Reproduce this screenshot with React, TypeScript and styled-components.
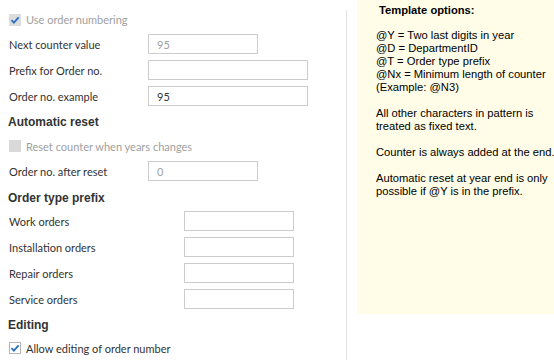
import styled, { createGlobalStyle } from "styled-components";

const GlobalStyle = createGlobalStyle`
  html, body {
    margin: 0;
    padding: 0;
    background: #ffffff;
  }
  body {
    font-family: Lato, "Liberation Sans", sans-serif;
    font-size: 11px;
    color: #333333;
  }
`;

const CheckIcon = ({ disabled }: { disabled?: boolean }) => (
  <svg width="12" height="12" viewBox="0 0 12 12">
    <rect x="0.5" y="0.5" width="11" height="11" fill={disabled ? "#dcdcdc" : "#ffffff"} stroke={disabled ? "#dcdcdc" : "#b5b5b5"} />
    <path d="M2.5 6.2 L4.9 8.6 L9.6 3.4" fill="none" stroke="#2b6fc1" strokeWidth="1.8" />
  </svg>
);

const EmptyBox = () => (
  <svg width="12" height="12" viewBox="0 0 12 12">
    <rect x="0" y="0" width="12" height="12" fill="#d9d9d9" />
  </svg>
);

type FieldProps = { label: string; value?: string; wide?: boolean; disabled?: boolean; indent?: number };

const Field = ({ label, value, wide, disabled, indent = 139 }: FieldProps) => (
  <FieldRow>
    <Label $w={indent}>{label}</Label>
    <Input $w={wide ? 160 : 110} $disabled={disabled} readOnly value={value ?? ""} />
  </FieldRow>
);

export default function App() {
  return (
    <>
      <GlobalStyle />
      <Page>
        <LeftPane>
          <CheckRow $h={23} $muted>
            <CheckIcon disabled />
            <span>Use order numbering</span>
          </CheckRow>
          <Field label="Next counter value" value="95" disabled />
          <Field label="Prefix for Order no." wide />
          <Field label="Order no. example" value="95" wide />
          <Heading $h={25}>Automatic reset</Heading>
          <CheckRow $h={24} $muted>
            <EmptyBox />
            <span>Reset counter when years changes</span>
          </CheckRow>
          <Field label="Order no. after reset" value="0" disabled />
          <Heading $h={24} $shift={3}>Order type prefix</Heading>
          <Field label="Work orders" indent={175} />
          <Field label="Installation orders" indent={175} />
          <Field label="Repair orders" indent={175} />
          <Field label="Service orders" indent={175} />
          <Heading $h={26}>Editing</Heading>
          <CheckRow $h={20}>
            <CheckIcon />
            <span>Allow editing of order number</span>
          </CheckRow>
        </LeftPane>
        <Divider />
        <InfoPanel>
          <InfoTitle>Template options:</InfoTitle>
          <InfoBlock>
            @Y = Two last digits in year
            <br />
            @D = DepartmentID
            <br />
            @T = Order type prefix
            <br />
            @Nx = Minimum length of counter
            <br />
            (Example: @N3)
          </InfoBlock>
          <InfoBlock>
            All other characters in pattern is
            <br />
            treated as fixed text.
          </InfoBlock>
          <InfoBlock>Counter is always added at the end.</InfoBlock>
          <InfoBlock>
            Automatic reset at year end is only
            <br />
            possible if @Y is in the prefix.
          </InfoBlock>
        </InfoPanel>
      </Page>
    </>
  );
}

const Page = styled("div")`
  width: 554px;
  height: 360px;
  overflow: hidden;
  /* flex */
  display: flex;
  flex-direction: row;
  align-items: flex-start;
`;

const LeftPane = styled("div")`
  width: 337px;
  padding: 8px 0 0 9px;
  /* flex */
  display: flex;
  flex-direction: column;
`;

const CheckRow = styled("div")<{ $h: number; $muted?: boolean }>`
  height: ${(p) => p.$h}px;
  color: ${(p) => (p.$muted ? "#a0a0a0" : "#333333")};
  /* flex */
  display: flex;
  align-items: center;
  gap: 5px;
`;

const Heading = styled("div")<{ $h: number; $shift?: number }>`
  height: ${(p) => p.$h}px;
  margin-left: -1px;
  padding-top: ${(p) => p.$shift ?? 0}px;
  box-sizing: border-box;
  font-family: "Liberation Sans", sans-serif;
  font-size: 12px;
  font-weight: bold;
  color: #333333;
  /* flex */
  display: flex;
  align-items: center;
`;

const FieldRow = styled("div")`
  height: 26px;
  /* flex */
  display: flex;
  align-items: center;
`;

const Label = styled("div")<{ $w: number }>`
  width: ${(p) => p.$w}px;
  flex-shrink: 0;
`;

const Input = styled("input")<{ $w: number; $disabled?: boolean }>`
  width: ${(p) => p.$w}px;
  height: 20px;
  box-sizing: border-box;
  border: 1px solid #cccccc;
  padding: 0 8px;
  margin: 0;
  outline: none;
  font-family: inherit;
  font-size: 11px;
  color: ${(p) => (p.$disabled ? "#a0a0a0" : "#333333")};
  background: #ffffff;
`;

const Divider = styled("div")`
  width: 1px;
  height: 350px;
  margin-top: 10px;
  background: #e3e3e3;
`;

const InfoPanel = styled("div")`
  width: 197px;
  height: 314px;
  margin-left: 10px;
  padding: 4px 0 0 19px;
  box-sizing: border-box;
  background: #fffce8;
  font-family: "Liberation Sans", sans-serif;
  font-size: 11.2px;
  line-height: 13px;
  color: #000000;
  /* flex */
  display: flex;
  flex-direction: column;
  gap: 13px;
`;

const InfoTitle = styled("div")`
  font-weight: bold;
  padding-left: 3px;
  margin-bottom: -1px;
`;

const InfoBlock = styled("div")`
  white-space: nowrap;
`;
